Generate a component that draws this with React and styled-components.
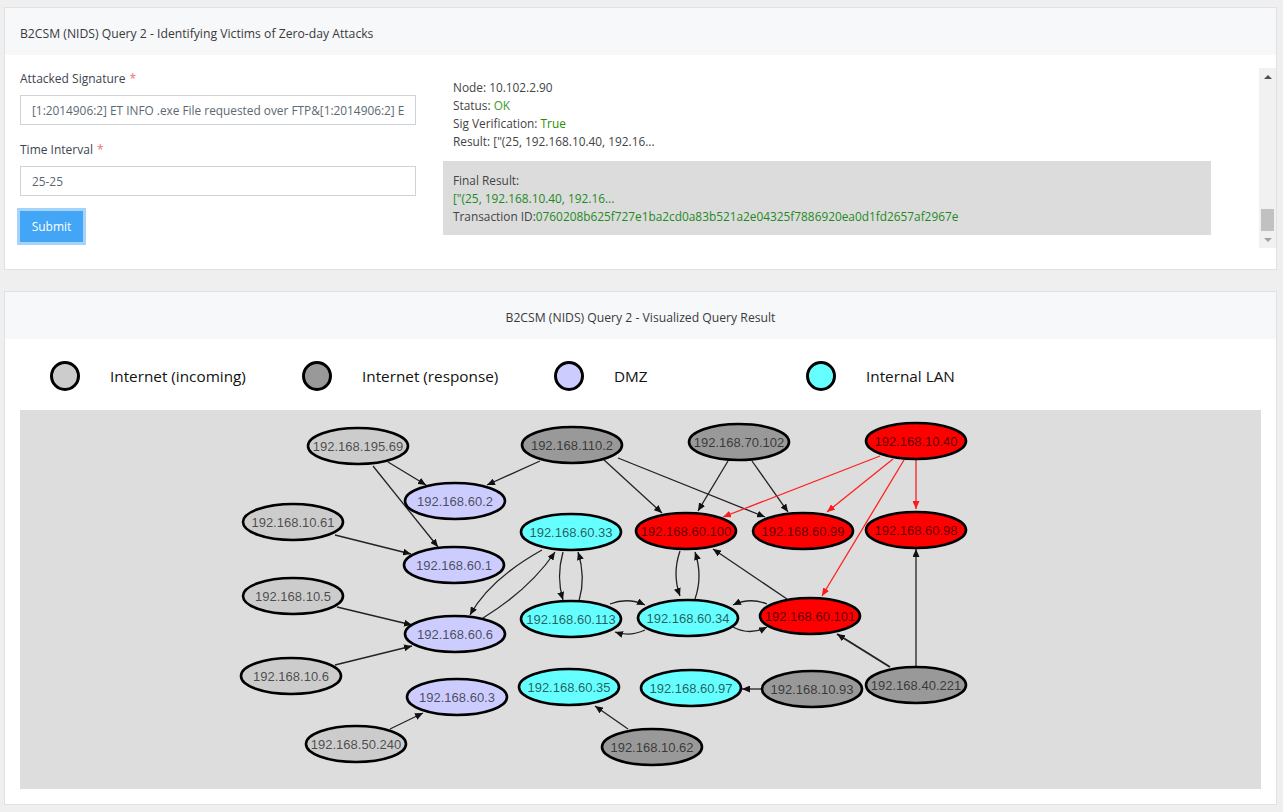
import React from "react";
import styled, { createGlobalStyle } from "styled-components";

const GlobalStyle = createGlobalStyle`
  html, body { margin: 0; padding: 0; background: #efefef; }
  body { font-family: "Open Sans", "Noto Sans", sans-serif; color: #333; }
  * { box-sizing: border-box; }
`;

const Page = styled.div`
  padding: 7px 6px 7px 4px;
  display: flex;
  flex-direction: column;
  gap: 21px;
`;

const Card = styled.section`
  background: #fff;
  border: 1px solid #e0e1e4;
`;

const CardHeader = styled.div`
  height: 47px;
  background: #f7f8fa;
  display: flex;
  align-items: center;
  justify-content: ${(p) => (p.$center ? "center" : "flex-start")};
  padding: 3px 15px 0;
  font-size: 12.2px;
  color: #3a3a3a;
`;

const QueryBody = styled.div`
  display: flex;
  padding: 13px 0 21px 15px;
`;

const FormCol = styled.div`
  width: 396px;
  flex: none;
  display: flex;
  flex-direction: column;
`;

const Label = styled.label`
  font-size: 12px;
  line-height: 20px;
  color: #3d4451;
  margin-top: ${(p) => p.$mt || 0}px;
  padding-top: 1px;
`;

const Req = styled.span`
  color: #f07070;
  margin-left: 4px;
`;

const Input = styled.input`
  margin-top: 6px;
  height: 30px;
  width: 100%;
  border: 1px solid #cfd3d8;
  padding: 0 11px;
  font-family: "Open Sans", sans-serif;
  font-size: 11.85px;
  color: #5c6873;
  background: #fff;
  outline: none;
`;

const SubmitButton = styled.button`
  margin-top: 15px;
  align-self: flex-start;
  width: 63px;
  height: 31px;
  background: #42a5f5;
  color: #fff;
  border: none;
  font-family: "Open Sans", sans-serif;
  font-size: 12px;
  box-shadow: 0 0 0 3px #a5d3fa;
`;

const ResultArea = styled.div`
  margin-left: 27px;
  flex: 1;
  height: 180px;
  display: flex;
`;

const ResultContent = styled.div`
  flex: 1;
  overflow: hidden;
  display: flex;
  flex-direction: column;
  justify-content: flex-end;
  padding-bottom: 13px;
`;

const ScrollRail = styled.div`
  width: 17px;
  flex: none;
  background: #f1f1f1;
  display: flex;
  flex-direction: column;
`;

const ScrollButton = styled.div`
  height: 17px;
  display: flex;
  align-items: center;
  justify-content: center;

  &::after {
    content: "";
    border-left: 4px solid transparent;
    border-right: 4px solid transparent;
    ${(p) =>
      p.$down
        ? "border-top: 4px solid #a3a3a3;"
        : "border-bottom: 4px solid #505050;"}
  }
`;

const ScrollTrack = styled.div`
  flex: 1;
  display: flex;
  flex-direction: column;
  justify-content: flex-end;
  padding: 0 2px;
`;

const ScrollThumb = styled.div`
  height: 22px;
  background: #c1c1c1;
`;

const NodeBlock = styled.div`
  padding: 10px;
  font-size: 11.85px;
  line-height: 18px;
  color: #444;
`;

const FinalBox = styled(NodeBlock)`
  width: 768px;
  background: #dcdcdc;
  margin-top: 1px;
`;

const Line = styled.div`
  white-space: nowrap;
`;

const Good = styled.span`
  color: ${(p) => p.$c || "#1e8a1e"};
`;

const Legend = styled.div`
  display: flex;
  padding: 22px 0 19px 45px;
`;

const LegendItem = styled.div`
  width: 252px;
  display: flex;
  align-items: center;
  gap: 30px;
`;

const Dot = styled.span`
  width: 30px;
  height: 30px;
  border-radius: 50%;
  border: 3px solid #000;
  background: ${(p) => p.$fill};
  flex: none;
`;

const LegendText = styled.span`
  font-size: 15.3px;
  color: #111;
`;

const GraphWrap = styled.div`
  margin: 0 15px 15px;
  height: 379px;
  background: #dddddd;
`;

const GraphSvg = styled.svg`
  display: block;
  width: 100%;
  height: 100%;
`;

const NODE_COLORS = {
  in: "#cccccc",
  resp: "#999999",
  dmz: "#ccccff",
  lan: "#66ffff",
  hit: "#ff0000",
};

const nodes = [
  ["192.168.195.69", 358, 447, "in"],
  ["192.168.110.2", 572, 446, "resp"],
  ["192.168.70.102", 739, 443, "resp"],
  ["192.168.10.40", 916, 442, "hit"],
  ["192.168.60.2", 455, 502, "dmz"],
  ["192.168.10.61", 293, 523, "in"],
  ["192.168.60.33", 571, 533, "lan"],
  ["192.168.60.100", 686, 532, "hit"],
  ["192.168.60.99", 803, 532, "hit"],
  ["192.168.60.98", 916, 531, "hit"],
  ["192.168.60.1", 454, 566, "dmz"],
  ["192.168.10.5", 293, 597, "in"],
  ["192.168.60.113", 571, 620, "lan"],
  ["192.168.60.34", 688, 619, "lan"],
  ["192.168.60.101", 810, 617, "hit"],
  ["192.168.60.6", 455, 635, "dmz"],
  ["192.168.10.6", 291, 677, "in"],
  ["192.168.60.35", 569, 688, "lan"],
  ["192.168.60.97", 691, 689, "lan"],
  ["192.168.10.93", 812, 690, "resp"],
  ["192.168.40.221", 916, 686, "resp"],
  ["192.168.60.3", 457, 698, "dmz"],
  ["192.168.50.240", 356, 745, "in"],
  ["192.168.10.62", 652, 748, "resp"],
];

const edges = [
  ["M388,463 L426,486"],
  ["M373,467 L438,548"],
  ["M540,462 L487,486"],
  ["M335,536 L411,555"],
  ["M542,551 Q490,580 470,616"],
  ["M483,619 Q530,590 555,553"],
  ["M563,553 Q556,578 563,601"],
  ["M579,602 Q586,578 578,553"],
  ["M337,608 L412,626"],
  ["M335,666 L412,647"],
  ["M390,730 L423,714"],
  ["M603,460 L662,514"],
  ["M618,459 L765,518"],
  ["M728,462 L698,512"],
  ["M752,462 L788,513"],
  ["M880,457 L723,518", "red"],
  ["M893,460 L827,513", "red"],
  ["M904,461 L822,597", "red"],
  ["M916,461 L916,510", "red"],
  ["M680,552 Q672,575 680,597"],
  ["M695,600 Q703,577 695,553"],
  ["M787,600 L713,550"],
  ["M767,605 Q750,598 733,606"],
  ["M733,628 Q750,637 767,628"],
  ["M610,605 Q628,598 645,606"],
  ["M645,631 Q630,638 615,633"],
  ["M890,668 L837,635", "thick"],
  ["M916,667 L916,550"],
  ["M762,690 L742,690"],
  ["M628,730 L595,707"],
];

function NetworkGraph() {
  return (
    <GraphSvg viewBox="20 411 1241 379" preserveAspectRatio="none">
      <defs>
        <marker id="arrowBlack" viewBox="0 0 8 7" refX="8" refY="3.5" markerWidth="8" markerHeight="7" markerUnits="userSpaceOnUse" orient="auto">
          <path d="M0,0 L8,3.5 L0,7 z" fill="#111" />
        </marker>
        <marker id="arrowRed" viewBox="0 0 8 7" refX="8" refY="3.5" markerWidth="8" markerHeight="7" markerUnits="userSpaceOnUse" orient="auto">
          <path d="M0,0 L8,3.5 L0,7 z" fill="#ff1a1a" />
        </marker>
      </defs>
      {edges.map(([d, kind], i) => (
        <path
          key={i}
          d={d}
          fill="none"
          stroke={kind === "red" ? "#ff2020" : "#222"}
          strokeWidth={kind === "thick" ? 2 : 1.3}
          markerEnd={kind === "red" ? "url(#arrowRed)" : "url(#arrowBlack)"}
        />
      ))}
      {nodes.map(([label, cx, cy, kind]) => (
        <g key={label}>
          <ellipse cx={cx} cy={cy} rx="50" ry="18" fill={NODE_COLORS[kind]} stroke="#000" strokeWidth="2.6" />
          <text
            x={cx}
            y={cy + 0.5}
            textAnchor="middle"
            dominantBaseline="central"
            fontFamily="'Liberation Sans', Arial, sans-serif"
            fontSize="13"
            fill="#000"
            fillOpacity="0.65"
          >
            {label}
          </text>
        </g>
      ))}
    </GraphSvg>
  );
}

function ResultPanel() {
  return (
    <ResultArea>
      <ResultContent>
        <NodeBlock>
          <Line>Node: 10.102.2.90</Line>
          <Line>Status: <Good $c="#3e9a2a">OK</Good></Line>
          <Line>Sig Verification: <Good $c="#2a8c00">True</Good></Line>
          <Line>Result: ["(25, 192.168.10.40, 192.16...</Line>
        </NodeBlock>
        <FinalBox>
          <Line>Final Result:</Line>
          <Line><Good>["(25, 192.168.10.40, 192.16...</Good></Line>
          <Line>
            Transaction ID:<Good>0760208b625f727e1ba2cd0a83b521a2e04325f7886920ea0d1fd2657af2967e</Good>
          </Line>
        </FinalBox>
      </ResultContent>
      <ScrollRail>
        <ScrollButton />
        <ScrollTrack>
          <ScrollThumb />
        </ScrollTrack>
        <ScrollButton $down />
      </ScrollRail>
    </ResultArea>
  );
}

const legend = [
  ["Internet (incoming)", "#cccccc"],
  ["Internet (response)", "#999999"],
  ["DMZ", "#ccccff"],
  ["Internal LAN", "#66ffff"],
];

export default function App() {
  return (
    <>
      <GlobalStyle />
      <Page>
        <Card>
          <CardHeader>B2CSM (NIDS) Query 2 - Identifying Victims of Zero-day Attacks</CardHeader>
          <QueryBody>
            <FormCol>
              <Label>Attacked Signature<Req>*</Req></Label>
              <Input readOnly value="[1:2014906:2] ET INFO .exe File requested over FTP&[1:2014906:2] ET INFO .exe File requested over FTP" />
              <Label $mt={14}>Time Interval<Req>*</Req></Label>
              <Input readOnly value="25-25" />
              <SubmitButton>Submit</SubmitButton>
            </FormCol>
            <ResultPanel />
          </QueryBody>
        </Card>
        <Card>
          <CardHeader $center>B2CSM (NIDS) Query 2 - Visualized Query Result</CardHeader>
          <Legend>
            {legend.map(([t, c]) => (
              <LegendItem key={t}>
                <Dot $fill={c} />
                <LegendText>{t}</LegendText>
              </LegendItem>
            ))}
          </Legend>
          <GraphWrap>
            <NetworkGraph />
          </GraphWrap>
        </Card>
      </Page>
    </>
  );
}
